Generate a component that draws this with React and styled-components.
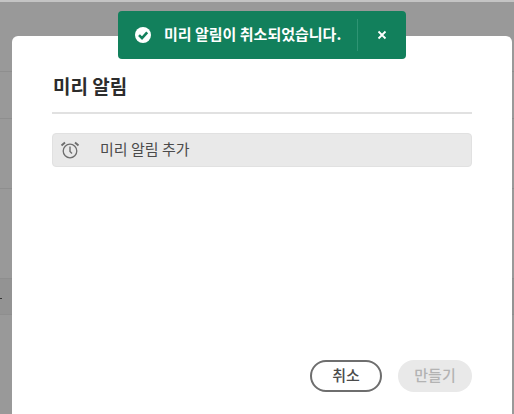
import React from "react";
import styled, { createGlobalStyle } from "styled-components";

const Global = createGlobalStyle`
  html, body { margin: 0; padding: 0; }
  body { font-family: "Noto Sans CJK KR", "Noto Sans", sans-serif; overflow: hidden; }
`;
const Page = styled.div`
  position: relative; width: 514px; height: 414px; overflow: hidden; background: #999;
`;
const TopStrip = styled.div`height: 2px; background: #c4c4c4;`;
const BackRows = styled.div`display: flex; flex-direction: column;`;
const BackRow = styled.div`
  height: ${p => p.$h}px; box-sizing: border-box;
  border-bottom: 1px solid #8e8e8e;
  background: ${p => p.$dark ? "#939393" : "transparent"};
  display: flex; align-items: center; padding-top: ${p => p.$dark ? 3 : 0}px;
`;
const BackMark = styled.span`width: 2px; height: 1px; background: #333;`;
const Modal = styled.div`
  position: absolute; left: 12px; top: 36px; width: 500px; height: 378px;
  box-sizing: border-box; padding: 36px 40px 22px 40px;
  background: #fff; border-radius: 6px 6px 0 0;
  display: flex; flex-direction: column;
`;
const Title = styled.h2`
  margin: 0; font-size: 19px; line-height: 28px; font-weight: 700; color: #2c2c2c;
  padding-bottom: 12px; padding-left: 1px; border-bottom: 2px solid #e1e1e1;
`;
const AddRow = styled.div`
  margin-top: 19px; height: 34px; box-sizing: border-box;
  display: flex; align-items: center; gap: 20px; padding-left: 7px;
  background: #e9e9e9; border: 1px solid #e1e1e1; border-radius: 4px;
  font-size: 15px; line-height: 20px; color: #4b4b4b;
`;
const AddLabel = styled.span`padding-bottom: 2px;`;
const Footer = styled.div`
  margin-top: auto; display: flex; justify-content: flex-end; gap: 16px;
`;
const Button = styled.button`
  width: ${p => p.$w}px; height: 32px; box-sizing: border-box; border-radius: 16px;
  font: 500 15px "Noto Sans CJK KR", sans-serif; padding: 0 0 3px;
  background: ${p => p.$disabled ? "#e9e9e9" : "#fff"};
  color: ${p => p.$disabled ? "#b3b3b3" : "#4b4b4b"};
  border: ${p => p.$disabled ? "none" : "2px solid #6e6e6e"};
`;
const Toast = styled.div`
  position: absolute; left: 118px; top: 11px; width: 288px; height: 48px;
  box-sizing: border-box; padding: 0 0 0 17px;
  display: flex; align-items: center;
  background: #12805c; border-radius: 4px; color: #fff;
`;
const ToastText = styled.span`
  margin-left: 13px; font-size: 15px; line-height: 20px; font-weight: 700;
  white-space: nowrap; flex: 1; padding-bottom: 2px;
`;
const ToastDivider = styled.div`width: 1px; height: 32px; background: #2f9474;`;
const ToastClose = styled.div`width: 48px; display: flex; justify-content: center;`;

const Check = () => (
  <svg width="16" height="16" viewBox="0 0 16 16">
    <circle cx="8" cy="8" r="8" fill="#fff" />
    <path d="M4 8.2 7 11.2 12.2 5.4" fill="none" stroke="#12805c" strokeWidth="2.6" />
  </svg>
);
const Close = () => (
  <svg width="10" height="10" viewBox="0 0 10 10">
    <path d="M1.5 1.5 8.5 8.5M8.5 1.5 1.5 8.5" stroke="#fff" strokeWidth="1.8" />
  </svg>
);
const Alarm = () => (
  <svg width="20" height="20" viewBox="0 0 20 20" fill="none" stroke="#6e6e6e">
    <circle cx="10" cy="11" r="6.8" strokeWidth="1.3" />
    <path d="M10 6.5V11.5L12 13.5" strokeWidth="1.4" />
    <path d="M1.5 5.5 5 2.5M18.5 5.5 15 2.5" strokeWidth="1.9" />
  </svg>
);

export default function App() {
  return (
    <Page>
      <Global />
      <TopStrip />
      <BackRows>
        <BackRow $h={70} />
        <BackRow $h={47} />
        <BackRow $h={70} />
        <BackRow $h={90} />
        <BackRow $h={36} $dark><BackMark /></BackRow>
      </BackRows>
      <Modal>
        <Title>미리 알림</Title>
        <AddRow>
          <Alarm />
          <AddLabel>미리 알림 추가</AddLabel>
        </AddRow>
        <Footer>
          <Button $w={72}>취소</Button>
          <Button $w={74} $disabled>만들기</Button>
        </Footer>
      </Modal>
      <Toast>
        <Check />
        <ToastText>미리 알림이 취소되었습니다.</ToastText>
        <ToastDivider />
        <ToastClose><Close /></ToastClose>
      </Toast>
    </Page>
  );
}
